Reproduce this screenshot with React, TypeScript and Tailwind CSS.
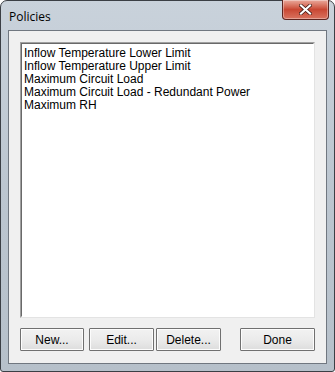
import React from "react";

const items = [
  "Inflow Temperature Lower Limit",
  "Inflow Temperature Upper Limit",
  "Maximum Circuit Load",
  "Maximum Circuit Load - Redundant Power",
  "Maximum RH",
];

const WinButton = ({ label, className = "" }: { label: string; className?: string }) => (
  <button
    className={`h-[23px] rounded-[1px] border border-[#707070] bg-gradient-to-b from-[#f2f2f2] via-[#ebebeb] to-[#dddddd] text-[12px] text-black shadow-[inset_0_0_0_1px_#fcfcfc] ${className}`}
  >
    {label}
  </button>
);

export default function App() {
  return (
    <div className="w-[335px] h-[372px] bg-white" style={{ fontFamily: '"Liberation Sans", Tahoma, sans-serif' }}>
      <div className="w-[335px] h-[372px] rounded-t-[7px] rounded-b-[3px] border border-[#3b3f45] bg-gradient-to-b from-[#c9d2db] via-[#bcc6d0] to-[#b6c0ca] flex flex-col px-[7px] pb-[7px]">
        {/* title bar */}
        <div className="h-[29px] flex items-start justify-between">
          <span className="mt-[7px] ml-[1px] text-[12px] text-black" style={{ fontFamily: '"Open Sans", "Liberation Sans", sans-serif' }}>
            Policies
          </span>
          <div className="-mt-px mr-[-2px] w-[47px] h-[20px] rounded-b-[4px] border border-[#5e2520] border-t-0 bg-gradient-to-b from-[#e9a99c] via-[#c94733] to-[#d9725f] flex items-center justify-center shadow-[inset_0_0_0_1px_rgba(255,255,255,0.35)]">
            <svg width="13" height="11" viewBox="0 0 13 11">
              <path d="M2 1.5 L11 9.5 M11 1.5 L2 9.5" stroke="#3a1510" strokeWidth="3.6" strokeLinecap="square" />
              <path d="M2 1.5 L11 9.5 M11 1.5 L2 9.5" stroke="#ffffff" strokeWidth="2.2" strokeLinecap="square" />
            </svg>
          </div>
        </div>
        {/* client area */}
        <div className="flex-1 border border-[#707780] bg-[#f0f0f0] flex flex-col pt-[11px] px-[11px] pb-[12px]">
          <div className="flex-1 border border-t-[#a0a0a0] border-l-[#a0a0a0] border-r-[#e3e3e3] border-b-[#e3e3e3] bg-white">
            <div className="h-full border border-t-[#696969] border-l-[#696969] border-r-white border-b-white pl-[2px] pt-[3px]">
              {items.map((t) => (
                <div key={t} className="h-[13px] leading-[13px] text-[12px] text-black whitespace-nowrap">
                  {t}
                </div>
              ))}
            </div>
          </div>
          <div className="mt-[10px] flex">
            <WinButton label="New..." className="w-[64px]" />
            <WinButton label="Edit..." className="w-[65px] ml-[5px]" />
            <WinButton label="Delete..." className="w-[65px] ml-[2px]" />
            <WinButton label="Done" className="w-[75px] ml-auto" />
          </div>
        </div>
      </div>
    </div>
  );
}
